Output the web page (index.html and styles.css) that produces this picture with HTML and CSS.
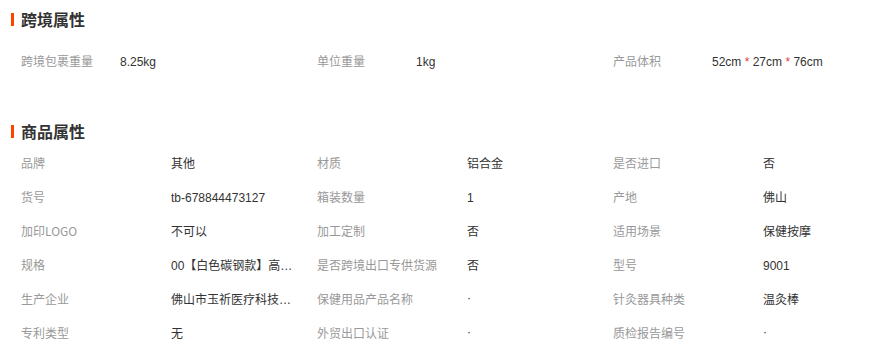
FILE: index.html
```html
<!DOCTYPE html>
<html lang="zh-CN">
<head>
<meta charset="utf-8">
<title>属性</title>
<link rel="stylesheet" href="styles.css">
</head>
<body>
<section class="sec sec-cross">
  <h2 class="sec-title">跨境属性</h2>
  <div class="grid grid-cross">
    <div class="cell"><span class="lbl">跨境包裹重量</span><span class="val">8.25kg</span></div>
    <div class="cell"><span class="lbl">单位重量</span><span class="val">1kg</span></div>
    <div class="cell"><span class="lbl">产品体积</span><span class="val">52cm <em class="star">*</em> 27cm <em class="star">*</em> 76cm</span></div>
  </div>
</section>
<section class="sec sec-goods">
  <h2 class="sec-title">商品属性</h2>
  <div class="grid grid-goods">
    <div class="cell"><span class="lbl">品牌</span><span class="val">其他</span></div>
    <div class="cell"><span class="lbl">材质</span><span class="val">铝合金</span></div>
    <div class="cell"><span class="lbl">是否进口</span><span class="val">否</span></div>

    <div class="cell"><span class="lbl">货号</span><span class="val">tb-678844473127</span></div>
    <div class="cell"><span class="lbl">箱装数量</span><span class="val">1</span></div>
    <div class="cell"><span class="lbl">产地</span><span class="val">佛山</span></div>

    <div class="cell"><span class="lbl">加印LOGO</span><span class="val">不可以</span></div>
    <div class="cell"><span class="lbl">加工定制</span><span class="val">否</span></div>
    <div class="cell"><span class="lbl">适用场景</span><span class="val">保健按摩</span></div>

    <div class="cell"><span class="lbl">规格</span><span class="val">00【白色碳钢款】高碳钢温灸棒</span></div>
    <div class="cell"><span class="lbl">是否跨境出口专供货源</span><span class="val">否</span></div>
    <div class="cell"><span class="lbl">型号</span><span class="val">9001</span></div>

    <div class="cell"><span class="lbl">生产企业</span><span class="val">佛山市玉祈医疗科技有限公司</span></div>
    <div class="cell"><span class="lbl">保健用品产品名称</span><span class="val dot">·</span></div>
    <div class="cell"><span class="lbl">针灸器具种类</span><span class="val">温灸棒</span></div>

    <div class="cell"><span class="lbl">专利类型</span><span class="val">无</span></div>
    <div class="cell"><span class="lbl">外贸出口认证</span><span class="val dot">·</span></div>
    <div class="cell"><span class="lbl">质检报告编号</span><span class="val dot">·</span></div>
  </div>
</section>
</body>
</html>
```

FILE: styles.css
```css
html, body {
  margin: 0;
  padding: 0;
  background: #fff;
}
body {
  font-family: "Microsoft YaHei", "Noto Sans CJK SC", "Liberation Sans", sans-serif;
  font-size: 12px;
  color: #333;
}
.sec {
  padding-left: 11px;
}
.sec-cross {
  padding-top: 9px;
}
.sec-goods {
  padding-top: 43px;
}
.sec-title {
  margin: 0;
  font-size: 16px;
  font-weight: bold;
  line-height: 20px;
  color: #333;
  height: 20px;
  display: flex;
  align-items: center;
}
.sec-title::before {
  content: "";
  width: 3px;
  height: 13px;
  background: #ff4400;
  margin-right: 7px;
}
.grid {
  display: grid;
  grid-template-columns: 296px 296px 292px;
  padding-left: 10px;
}
.grid-cross {
  margin-top: 15px;
}
.grid-goods {
  margin-top: 5px;
}
.cell {
  display: flex;
  align-items: center;
  height: 34px;
  line-height: 18px;
  white-space: nowrap;
  min-width: 0;
}
.lbl {
  color: #999;
  flex: none;
}
.grid-cross .lbl {
  width: 99px;
}
.grid-goods .lbl {
  width: 150px;
}
.val {
  color: #333;
  font-family: "Liberation Sans", "Noto Sans CJK SC", sans-serif;
  max-width: 124px;
  overflow: hidden;
  text-overflow: ellipsis;
  padding-top: 1px;
}
.grid-cross .val {
  max-width: none;
}
.star {
  font-style: normal;
  color: #e4393c;
}
.dot {
  position: relative;
  top: -2px;
}
```
